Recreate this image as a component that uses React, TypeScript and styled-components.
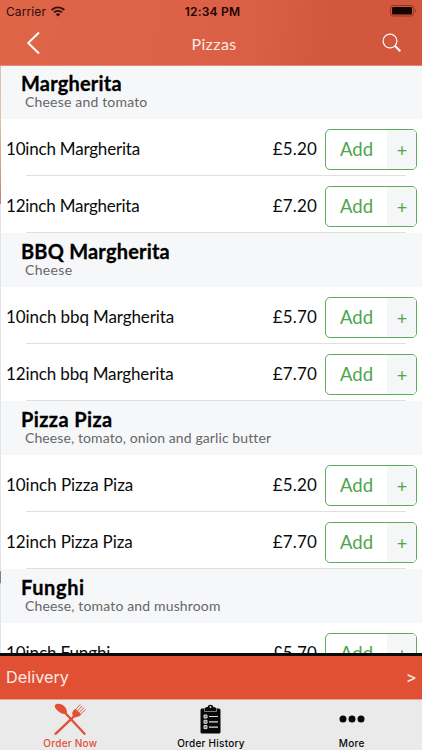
import React from 'react';
import styled, { createGlobalStyle } from 'styled-components';

const Global = createGlobalStyle`
  * { box-sizing: border-box; }
  body { margin: 0; background: #fff; overflow: hidden; }
`;

const Screen = styled.div`
  position: relative;
  width: 422px;
  height: 750px;
  display: flex;
  flex-direction: column;
  overflow: hidden;
  font-family: Lato, sans-serif;
  color: #0b0b0b;
`;

const Header = styled.header`
  position: relative;
  z-index: 1;
  flex: none;
  height: 66px;
  margin-bottom: -1px;
  border-bottom: 1px solid #e28b77;
  background: linear-gradient(97deg, #df6549 0%, #dd6247 35%, #db5f45 60%, #d2573d 77%, #d2573d 100%);
`;

const StatusBar = styled.div`
  display: grid;
  grid-template-columns: 1fr auto 1fr;
  align-items: center;
  height: 22px;
  padding: 0 5px 0 6px;
  font-family: Inter, sans-serif;
  font-size: 12px;
  color: #2a0d08;
`;

const Carrier = styled.div`
  display: flex;
  align-items: center;
  gap: 5px;
  letter-spacing: 0.1px;
`;

const Clock = styled.div`
  padding-left: 2px;
  font-weight: 600;
  letter-spacing: 0.2px;
  color: #1c0604;
`;

const Battery = styled.svg`
  justify-self: end;
  display: block;
`;

const NavBar = styled.div`
  display: grid;
  grid-template-columns: 1fr auto 1fr;
  align-items: center;
  height: 42px;
  padding: 0 20px 0 26px;
`;

const Title = styled.div`
  font-size: 16px;
  letter-spacing: 0.4px;
  color: #fdeae6;
`;

const Search = styled.svg`
  justify-self: end;
`;

const List = styled.main`
  flex: none;
  height: 588px;
  overflow: hidden;
  border-left: 1px solid #e4e4e6;
  border-image: linear-gradient(#d9c3b4 0, #e0c6a5 50px, #cf9a88 110px, #c07f74 139px, #e4e4e6 140px, #e4e4e6 505px, #808080 506px, #808080 517px, #e4e4e6 518px) 1;
  border-width: 0 0 0 1px;
`;

const Group = styled.section`
  height: 168px;
`;

const GroupHead = styled.div`
  height: 54px;
  padding: 6px 0 0 20px;
  background: #f6f7f9;
`;

const Name = styled.h2<{ $spacing: number }>`
  margin: 0;
  height: 24px;
  font-size: 20px;
  line-height: 24px;
  font-weight: 700;
  letter-spacing: ${p => p.$spacing}px;
  color: #000;
  -webkit-text-stroke: 0.3px #000;
`;

const Note = styled.div<{ $spacing: number }>`
  padding-left: 4px;
  font-size: 14px;
  line-height: 14px;
  letter-spacing: ${p => p.$spacing}px;
  color: #666;
`;

const Row = styled.div`
  display: flex;
  align-items: flex-start;
  height: 57px;
  padding: 10px 5px 0 5px;
  background: linear-gradient(#e0e0e1, #e0e0e1) 25px 56px / 380px 1px no-repeat #fff;
`;

const Label = styled.div<{ $spacing: number }>`
  flex: 1;
  font-size: 17px;
  line-height: 39px;
  letter-spacing: ${p => p.$spacing}px;
`;

const Price = styled.div`
  margin-right: 8px;
  font-size: 17px;
  line-height: 39px;
  letter-spacing: 0.15px;
`;

const AddButton = styled.button`
  display: grid;
  grid-template-columns: 1fr 29px;
  width: 92px;
  height: 41px;
  padding: 0;
  overflow: hidden;
  border: 1px solid #5dab5b;
  border-radius: 5px;
  background: #fff;
  font-family: Lato, sans-serif;
  color: #4ca64c;
  text-align: center;
`;

const AddText = styled.span`
  font-size: 18.5px;
  line-height: 38px;
`;

const Plus = styled.span`
  padding-left: 1px;
  background: #f5f6f8;
  font-size: 18px;
  line-height: 40px;
`;

const Delivery = styled.div`
  flex: none;
  display: flex;
  justify-content: space-between;
  height: 46px;
  padding: 0 6px;
  border-top: 3px solid #0a0a0a;
  background: #e15033;
  font-family: Inter, sans-serif;
  font-size: 16.3px;
  line-height: 42px;
  color: #fcece8;
`;

const Arrow = styled.span`
  font-family: Roboto, sans-serif;
  font-size: 18px;
  line-height: 43px;
`;

const Tabs = styled.nav`
  flex: 1;
  display: grid;
  grid-template-columns: repeat(3, 1fr);
  border-top: 1px solid #e7a294;
  background: #eaeaea;
`;

const Tab = styled.div<{ $active?: boolean }>`
  display: flex;
  flex-direction: column;
  align-items: center;
  font-family: Inter, sans-serif;
  font-size: 10px;
  font-weight: 500;
  line-height: 14px;
  letter-spacing: 0.25px;
  color: ${p => (p.$active ? '#e15033' : '#080808')};

  svg { display: block; margin: 3px 0 0; }
`;

type Item = { label: string; price: string; spacing: number };
type Pizza = { name: string; note: string; nameSpacing: number; noteSpacing: number; items: Item[] };

const menu: Pizza[] = [
  { name: 'Margherita', note: 'Cheese and tomato', nameSpacing: 0.2, noteSpacing: 0.18, items: [
    { label: '10inch Margherita', price: '£5.20', spacing: -0.2 },
    { label: '12inch Margherita', price: '£7.20', spacing: -0.23 },
  ] },
  { name: 'BBQ Margherita', note: 'Cheese', nameSpacing: 0.2, noteSpacing: 0.35, items: [
    { label: '10inch bbq Margherita', price: '£5.70', spacing: -0.1 },
    { label: '12inch bbq Margherita', price: '£7.70', spacing: -0.13 },
  ] },
  { name: 'Pizza Piza', note: 'Cheese, tomato, onion and garlic butter', nameSpacing: 0.4, noteSpacing: 0.1, items: [
    { label: '10inch Pizza Piza', price: '£5.20', spacing: -0.05 },
    { label: '12inch Pizza Piza', price: '£7.70', spacing: -0.08 },
  ] },
  { name: 'Funghi', note: 'Cheese, tomato and mushroom', nameSpacing: 0.6, noteSpacing: 0.15, items: [
    { label: '10inch Funghi', price: '£5.70', spacing: -0.1 },
  ] },
];

const WifiIcon = () => (
  <svg width="14" height="11" viewBox="0 0 14 11" fill="none" stroke="#2a0d08" strokeWidth="1.8">
    <path d="M.7 4a9 9 0 0 1 12.6 0M3 6.4a5.8 5.8 0 0 1 8 0" />
    <path d="M4.8 8.2a3.2 3.2 0 0 1 4.4 0L7 10.5z" fill="#2a0d08" stroke="none" />
  </svg>
);

const CutleryIcon = () => (
  <svg width="34" height="33" viewBox="0 0 34 33" fill="#e15033" stroke="#e15033" strokeLinecap="round">
    <path d="M2 2.200C4-.2 9 .7 11.800 3.800c2.200 2.500 2.600 5.400 1.500 6.600-1.200 1.200-4.500.8-7.300-1.600C2.800 6.200 1 4 2 2.200z" stroke="none" />
    <path d="M12.500 10.300L31.500 30.800" strokeWidth="2.300" />
    <path d="M21 13.300L2.500 30.800" strokeWidth="2.300" />
    <path d="M19.500 12c-.8-2 .3-4 2-5.700l1.500.2 5.300 5c-2 2-5 3.500-7 2.500z" stroke="none" />
    <path d="M22 7.300L27 1.700M23.800 8.700L29 3.100M25.600 10.100L30.800 4.900M27.200 11.600L32.200 6.800" strokeWidth=".9" />
  </svg>
);

const ClipboardIcon = () => (
  <svg width="22" height="33" viewBox="0 0 22 33">
    <path d="M2 5.500H5V5q1-.7 2.700-.9C8 1 13 1 13.300 4.100Q15 4.300 16 5v.5h3Q20.500 5.500 20.500 7v22q0 1.500-1.500 1.500H2Q.5 30.500.5 29V7Q.5 5.500 2 5.500z" fill="#080808" />
    <path d="M4.500 6V8.500h12V6" fill="none" stroke="#999" strokeWidth=".8" />
    <circle cx="10.500" cy="4" r=".9" fill="#eaeaea" />
    <path d="M9 13.500h9M9 18.800h9M9 24.100h9" stroke="#ddd" strokeWidth="1.200" />
    <path d="M4 12h3v3H4zM4 17.300h3v3H4zM4 22.600h3v3H4z" fill="#777" stroke="#ddd" strokeWidth="1" />
  </svg>
);

export default function App() {
  return (
    <Screen>
      <Global />
      <Header>
        <StatusBar>
          <Carrier>Carrier<WifiIcon /></Carrier>
          <Clock>12:34 PM</Clock>
          <Battery width="27" height="12" viewBox="0 0 27 12">
            <rect x=".5" y=".5" width="23" height="10.500" rx="2.500" fill="none" stroke="#8d3526" />
            <rect x="2" y="2" width="20" height="7.500" rx="1.200" fill="#160403" />
            <path d="M25 4v3.500c1.500-.3 1.500-3.200 0-3.500z" fill="#8d3526" />
          </Battery>
        </StatusBar>
        <NavBar>
          <svg width="15" height="24" viewBox="0 0 15 24" fill="none" stroke="#fff" strokeWidth="1.900">
            <path d="M13 1.500L2.200 12 13 22.500" />
          </svg>
          <Title>Pizzas</Title>
          <Search width="20" height="20" viewBox="0 0 20 20" fill="none" stroke="#fff">
            <circle cx="8" cy="8" r="6.900" strokeWidth="1.200" />
            <path d="M13 13l5.300 5.300" strokeWidth="2" />
          </Search>
        </NavBar>
      </Header>
      <List>
        {menu.map(pizza => (
          <Group key={pizza.name}>
            <GroupHead>
              <Name $spacing={pizza.nameSpacing}>{pizza.name}</Name>
              <Note $spacing={pizza.noteSpacing}>{pizza.note}</Note>
            </GroupHead>
            {pizza.items.map(item => (
              <Row key={item.label}>
                <Label $spacing={item.spacing}>{item.label}</Label>
                <Price>{item.price}</Price>
                <AddButton><AddText>Add</AddText><Plus>+</Plus></AddButton>
              </Row>
            ))}
          </Group>
        ))}
      </List>
      <Delivery><span>Delivery</span><Arrow>&gt;</Arrow></Delivery>
      <Tabs>
        <Tab $active><CutleryIcon />Order Now</Tab>
        <Tab><ClipboardIcon />Order History</Tab>
        <Tab>
          <svg width="26" height="33" viewBox="0 0 26 33" fill="#080808">
            <circle cx="4" cy="16" r="3.500" /><circle cx="13" cy="16" r="3.500" /><circle cx="22" cy="16" r="3.500" />
          </svg>
          More
        </Tab>
      </Tabs>
    </Screen>
  );
}
